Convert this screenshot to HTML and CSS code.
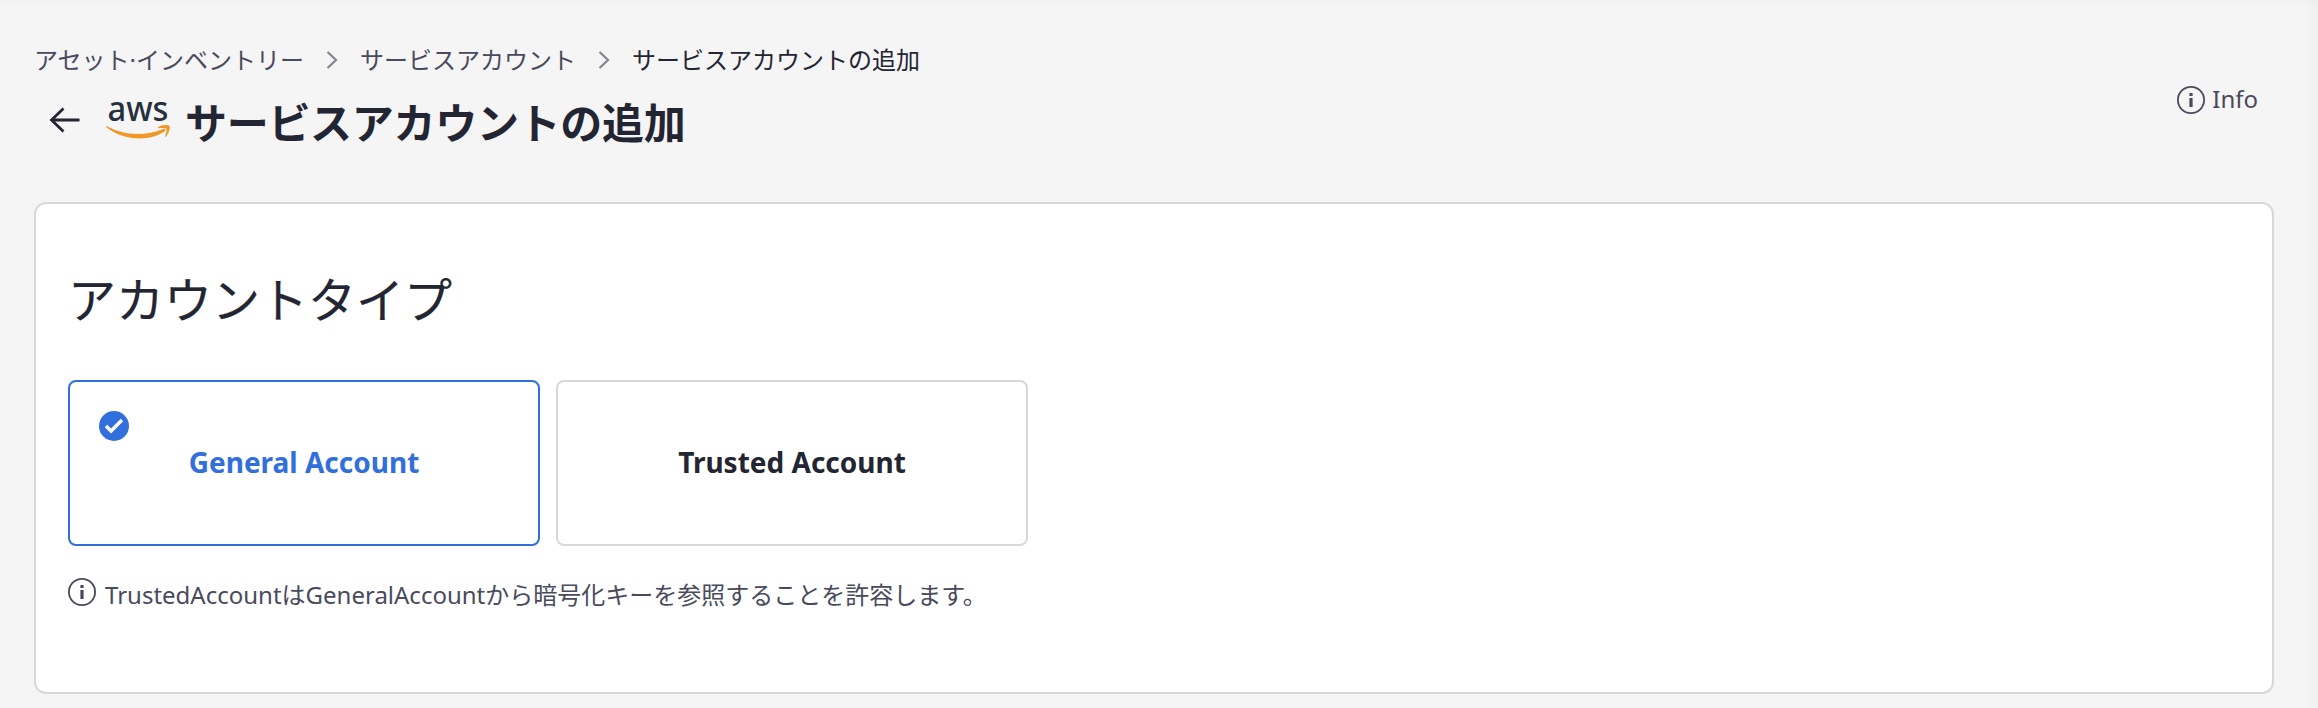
FILE: index.html
```html
<!DOCTYPE html>
<html lang="ja">
<head>
<meta charset="utf-8">
<title>サービスアカウントの追加</title>
<link rel="stylesheet" href="styles.css">
</head>
<body>
<main class="page">
  <header class="header">
    <div class="heading">
      <nav class="breadcrumbs">
        <span class="crumb">アセット·インベントリー</span>
        <svg class="chevron" viewBox="0 0 12 18"><path d="M1.500 1l8.500 8-8.500 8"/></svg>
        <span class="crumb">サービスアカウント</span>
        <svg class="chevron" viewBox="0 0 12 18"><path d="M1.500 1l8.500 8-8.500 8"/></svg>
        <span class="crumb current">サービスアカウントの追加</span>
      </nav>
      <div class="title-row">
        <svg class="back" viewBox="0 0 30 26"><path d="M14 1.500L2 13l12 11.500M2 13h28"/></svg>
        <svg class="logo" viewBox="0 0 64 44">
          <text class="logo-text" x="1.500" y="22.500" textLength="61" lengthAdjust="spacingAndGlyphs">aws</text>
          <path class="smile" d="M.5 28C17 37.500 39 38.500 57 31C59 30.200 60.500 32 58.500 33.500C43 44 16 42.500 .3 29Q-.2 28 .5 28z"/>
          <path class="smile" d="M52 29.300C55 26.600 62 26.400 63.400 27.700C64.700 30 62.500 36.200 59.600 38.800C59 39.200 58.700 38.900 59 38.300C60 36 61 32.200 60.300 30.900C59.500 29.700 55.500 29.800 52.800 30.200Q51.500 30.200 52 29.300z"/>
        </svg>
        <h1 class="title">サービスアカウントの追加</h1>
      </div>
    </div>
    <div class="info">
      <svg class="info-icon" viewBox="0 0 28 28"><circle cx="14" cy="14" r="13.100"/><path d="M12.400 7h3.200v3h-3.200zM12.400 12h3.200v9h-3.200z"/></svg>
      <span>Info</span>
    </div>
  </header>
  <section class="card">
    <h2 class="card-title">アカウントタイプ</h2>
    <div class="options">
      <div class="option selected">
        <svg class="check" viewBox="0 0 30 30"><circle cx="15" cy="15" r="15"/><path d="M7 15l5 5L23 9"/></svg>
        General Account
      </div>
      <div class="option">Trusted Account</div>
    </div>
    <div class="note">
      <svg class="info-icon" viewBox="0 0 28 28"><circle cx="14" cy="14" r="13.100"/><path d="M12.400 7h3.200v3h-3.200zM12.400 12h3.200v9h-3.200z"/></svg>
      <p class="note-text">TrustedAccountはGeneralAccountから暗号化キーを参照することを許容します。</p>
    </div>
  </section>
</main>
</body>
</html>
```
FILE: styles.css
```css
* { box-sizing: border-box; }
body {
  margin: 0;
  background: #f5f5f5;
  color: #232533;
  font-family: "Noto Sans", "Noto Sans CJK JP", sans-serif;
}
.page {
  height: 708px;
  padding: 42px 44px 14px 34px;
  overflow: hidden;
  background:
    linear-gradient(to bottom, rgba(0, 0, 0, 0.015), transparent 6px),
    linear-gradient(to left, #f0f0f0, #f5f5f5 14px);
}
.header {
  display: flex;
  justify-content: space-between;
  height: 160px;
}
.breadcrumbs {
  display: flex;
  align-items: center;
  height: 36px;
  font-size: 24px;
  line-height: 36px;
  white-space: nowrap;
  color: #494a5c;
}
.current { color: #232533; }
.chevron {
  width: 12px;
  height: 18px;
  margin: 0 22px;
  fill: none;
  stroke: #858593;
  stroke-width: 2.200;
}
.title-row {
  display: flex;
  align-items: center;
  height: 84px;
  padding-left: 15px;
}
.back {
  width: 31px;
  height: 26px;
  margin-right: 26px;
  fill: none;
  stroke: #232533;
  stroke-width: 2.800;
}
.logo { width: 64px; height: 44px; margin-right: 15px; overflow: visible; }
.logo-text { font-size: 34px; font-weight: 500; fill: #252f3e; }
.smile { fill: #f19728; }
.title {
  margin: 0;
  padding-top: 5px;
  font-size: 42px;
  line-height: 60px;
  letter-spacing: -0.300px;
  white-space: nowrap;
}
.info {
  display: flex;
  align-items: center;
  height: 36px;
  margin: 40px 16px 0 0;
  gap: 7px;
  font-size: 24px;
  line-height: 34px;
  color: #494a5c;
}
.info span { padding-bottom: 2px; }
.info .info-icon { margin-bottom: 1px; }
.info-icon { width: 28px; height: 28px; flex: none; fill: #494a5c; }
.info-icon circle { fill: none; stroke: #494a5c; stroke-width: 1.800; }
.card {
  height: 492px;
  padding: 64px 32px 0;
  border: 2px solid #d8d8d8;
  border-radius: 12px;
  background: #fff;
}
.card-title {
  height: 112px;
  margin: 0;
  font-size: 48px;
  font-weight: 400;
  line-height: 64px;
  -webkit-text-stroke: 0.200px #232533;
}
.options { display: flex; gap: 16px; }
.option {
  position: relative;
  display: flex;
  align-items: center;
  justify-content: center;
  width: 472px;
  height: 166px;
  padding-bottom: 2px;
  border: 2px solid #d8d8d8;
  border-radius: 8px;
  font-size: 28px;
  font-weight: 700;
}
.selected { border-color: #316fdc; color: #316fdc; }
.check { position: absolute; top: 29px; left: 29px; width: 30px; height: 30px; fill: #316fdc; }
.check path { fill: none; stroke: #fff; stroke-width: 3.400; }
.note {
  display: flex;
  gap: 9px;
  margin-top: 32px;
  color: #494a5c;
}
.note-text { margin: -1px 0 0; font-size: 24px; line-height: 36px; }
```
